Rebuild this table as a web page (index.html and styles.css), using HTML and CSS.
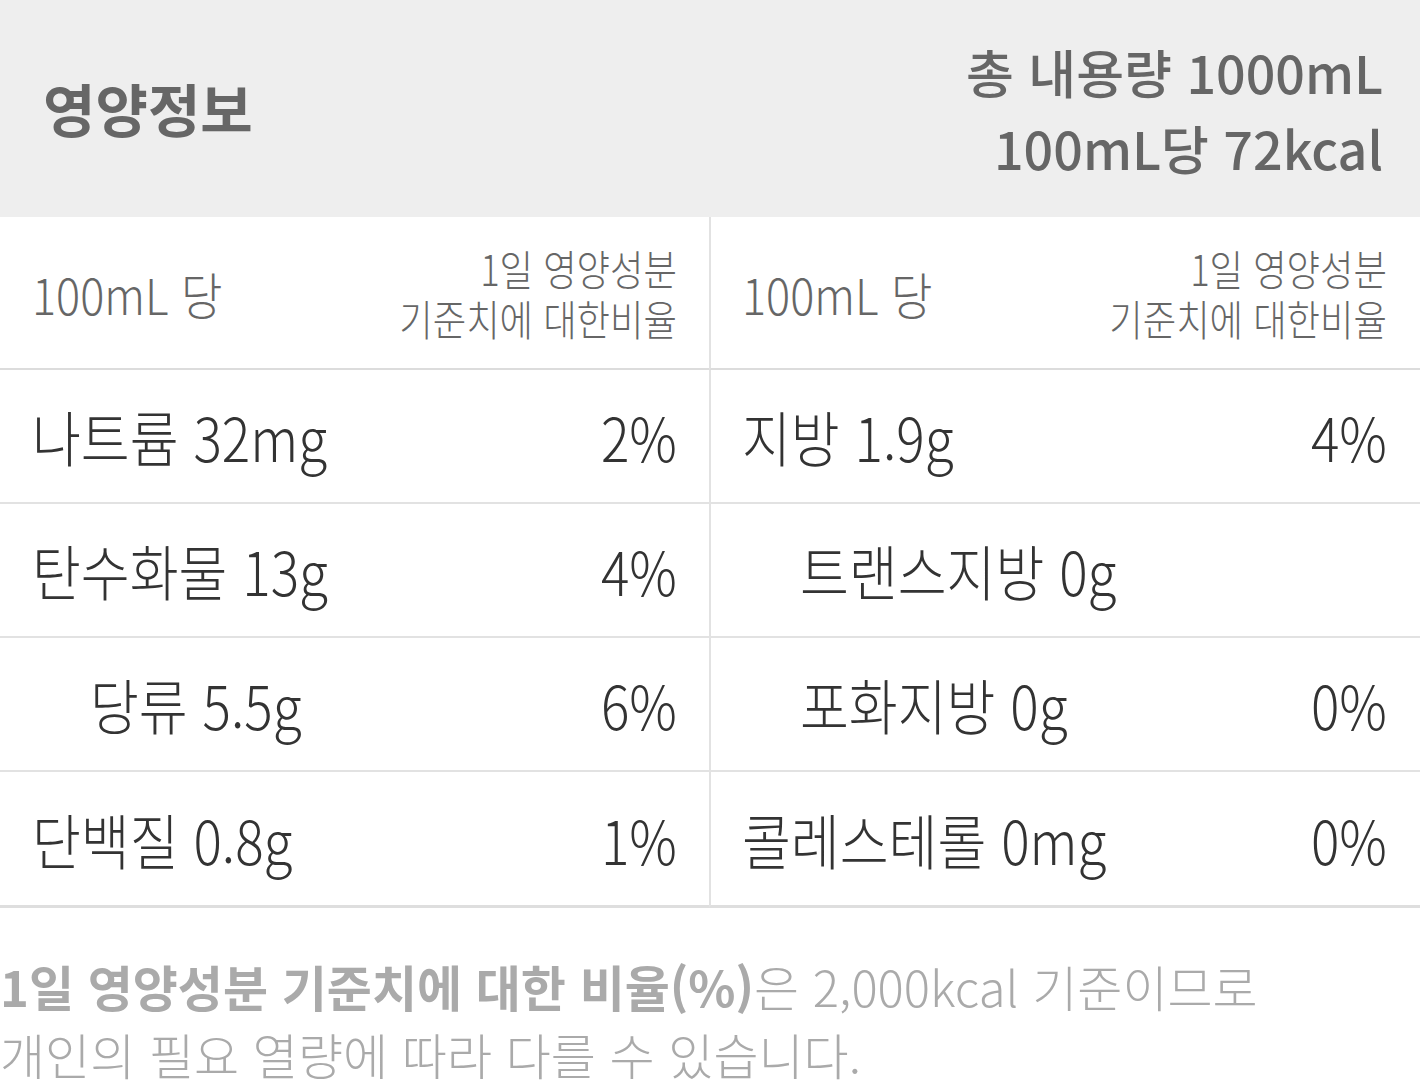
FILE: index.html
```html
<!DOCTYPE html>
<html lang="ko">
<head>
<meta charset="utf-8">
<title>영양정보</title>
<link rel="stylesheet" href="styles.css">
</head>
<body>
<div class="page">
  <header class="top">
    <h1 class="title">영양정보</h1>
    <div class="total">
      <p class="total-line">총 내용량 1000mL</p>
      <p class="total-line">100mL당 72kcal</p>
    </div>
  </header>

  <div class="table">
    <div class="cell head">
      <span class="head-l sq">100mL 당</span>
      <span class="head-r sq sq-r"><span class="head-line">1일 영양성분</span><span class="head-line">기준치에 대한비율</span></span>
    </div>
    <div class="cell head right">
      <span class="head-l sq">100mL 당</span>
      <span class="head-r sq sq-r"><span class="head-line">1일 영양성분</span><span class="head-line">기준치에 대한비율</span></span>
    </div>

    <div class="cell row">
      <span class="name sq">나트륨 32mg</span>
      <span class="pct sq sq-r">2%</span>
    </div>
    <div class="cell row right">
      <span class="name sq">지방 1.9g</span>
      <span class="pct sq sq-r">4%</span>
    </div>

    <div class="cell row">
      <span class="name sq">탄수화물 13g</span>
      <span class="pct sq sq-r">4%</span>
    </div>
    <div class="cell row right">
      <span class="name sub sq">트랜스지방 0g</span>
      <span class="pct sq sq-r"></span>
    </div>

    <div class="cell row">
      <span class="name sub sq">당류 5.5g</span>
      <span class="pct sq sq-r">6%</span>
    </div>
    <div class="cell row right">
      <span class="name sub sq">포화지방 0g</span>
      <span class="pct sq sq-r">0%</span>
    </div>

    <div class="cell row last">
      <span class="name sq">단백질 0.8g</span>
      <span class="pct sq sq-r">1%</span>
    </div>
    <div class="cell row right last">
      <span class="name sq">콜레스테롤 0mg</span>
      <span class="pct sq sq-r">0%</span>
    </div>
  </div>

  <div class="note">
    <p class="note-line"><strong class="note-strong">1일 영양성분 기준치에 대한 비율(%)</strong>은 2,000kcal 기준이므로</p>
    <p class="note-line">개인의 필요 열량에 따라 다를 수 있습니다.</p>
  </div>
</div>
</body>
</html>
```

FILE: styles.css
```css
* { box-sizing: border-box; }

html, body {
  margin: 0;
  padding: 0;
  background: #ffffff;
}

body {
  font-family: "Noto Sans CJK KR", "Noto Sans", sans-serif;
  width: 1420px;
  overflow: hidden;
}

.sq {
  display: inline-block;
  transform-origin: left center;
  white-space: nowrap;
}
.sq-r { transform-origin: right center; }

/* header */
.top {
  height: 217px;
  background: #eeeeee;
  display: flex;
  align-items: center;
  justify-content: space-between;
  padding: 0 37px 0 43px;
  color: #666666;
}
.title {
  margin: 0 0 2px 0;
  font-size: 57px;
  font-weight: 700;
  letter-spacing: 0;
  line-height: 1;
}
.total {
  display: flex;
  flex-direction: column;
  align-items: flex-end;
  margin-top: 2px;
}
.total-line {
  margin: 0;
  font-size: 52px;
  font-weight: 500;
  line-height: 76px;
  white-space: nowrap;
}

/* table */
.table {
  display: grid;
  grid-template-columns: 709px 711px;
}
.cell {
  display: flex;
  align-items: center;
  justify-content: space-between;
  border-bottom: 2px solid #e2e2e2;
  padding: 0 32px 0 32px;
}
.cell.right {
  border-left: 2px solid #e2e2e2;
  padding-left: 31px;
  padding-right: 33px;
}
.head {
  height: 153px;
  border-bottom-color: #dcdcdc;
  color: #666666;
  font-weight: 300;
}
.head-l {
  font-size: 50px;
  line-height: 1;
  transform: scaleX(0.9);
}
.head-r {
  display: inline-flex;
  flex-direction: column;
  align-items: flex-end;
  font-size: 42px;
  transform: scaleX(0.865);
  margin-top: 0;
}
.head-line {
  display: block;
  line-height: 50px;
  height: 50px;
}
.row {
  height: 134px;
  color: #333333;
  font-weight: 300;
  font-size: 60px;
}
.row.last {
  height: 136px;
  border-bottom: 3px solid #dedede;
}
.name, .pct {
  line-height: 1;
  transform: scaleX(0.885);
}
.name.sub { margin-left: 58px; }

/* note */
.note {
  margin-top: 44px;
  color: #aaaaaa;
  font-size: 49px;
  font-weight: 300;
}
.note-line {
  margin: 0;
  line-height: 68px;
  white-space: nowrap;
}
.note-strong { font-weight: 700; }
```
